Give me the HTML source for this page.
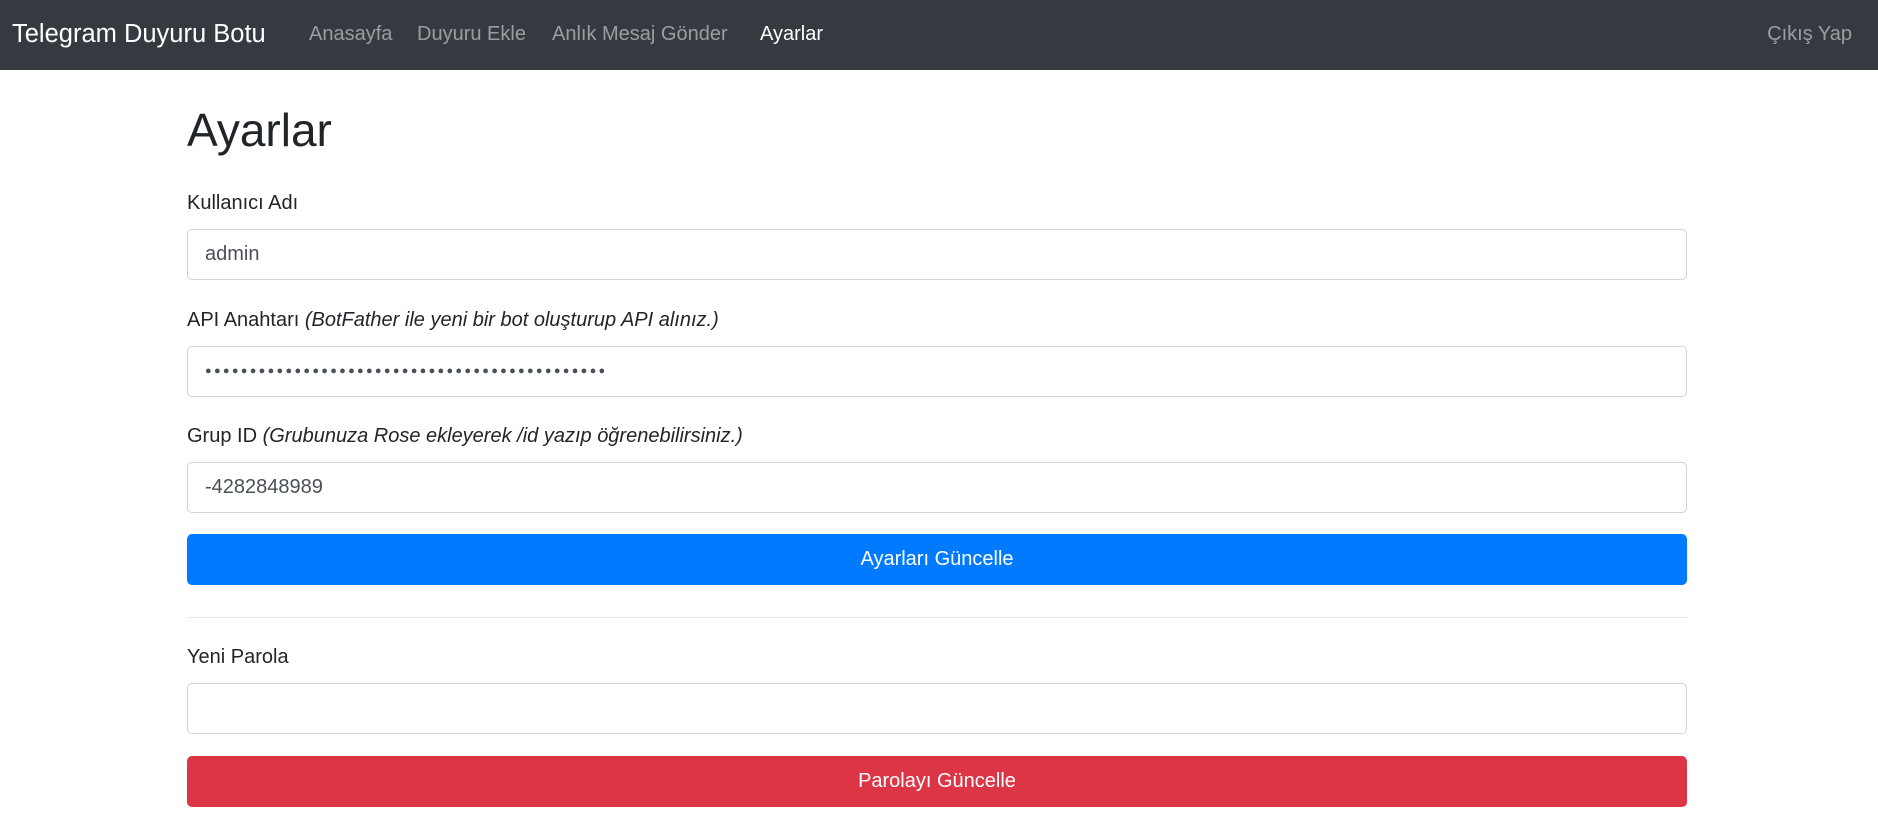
<!DOCTYPE html>
<html><head><meta charset="utf-8"><style>
*{box-sizing:border-box;margin:0;padding:0}
body{width:1878px;height:824px;background:#fff;font-family:"Liberation Sans",sans-serif;color:#212529;position:relative;overflow:hidden}
.nav{position:absolute;left:0;top:0;width:1878px;height:70px;background:#343a40}
.nav span{position:absolute;top:0;line-height:68px;font-size:20px;color:rgba(255,255,255,.5);white-space:nowrap}
.nav .brand{font-size:25.5px;color:#fff;left:12px}
.abs{position:absolute;white-space:nowrap}
.lbl{font-size:20px;color:#212529}
.inp{position:absolute;left:187px;width:1500px;height:51px;border:1px solid #ced4da;border-radius:5px;background:#fff;font-size:20px;color:#495057;padding-left:17px;line-height:49px}
.btn{position:absolute;left:187px;width:1500px;height:51px;border-radius:5px;color:#fff;font-size:20px;text-align:center;line-height:51px}
</style></head><body>
<div class="nav">
<span class="brand">Telegram Duyuru Botu</span>
<span style="left:309px">Anasayfa</span>
<span style="left:417px">Duyuru Ekle</span>
<span style="left:552px">Anlık Mesaj Gönder</span>
<span style="left:760px;color:#fff">Ayarlar</span>
<span style="right:26px">Çıkış Yap</span>
</div>
<div class="abs" style="left:187px;top:102px;font-size:46px;line-height:56px;font-weight:normal;color:#212529">Ayarlar</div>
<div class="abs lbl" style="left:187px;top:192px">Kullanıcı Adı</div>
<div class="inp" style="top:229px">admin</div>
<div class="abs lbl" style="left:187px;top:309px">API Anahtarı <i>(BotFather ile yeni bir bot oluşturup API alınız.)</i></div>
<div class="inp" style="top:346px;font-size:11px;letter-spacing:2.3px;color:#495057">●●●●●●●●●●●●●●●●●●●●●●●●●●●●●●●●●●●●●●●●●●●●●</div>
<div class="abs lbl" style="left:187px;top:425px">Grup ID <i>(Grubunuza Rose ekleyerek /id yazıp öğrenebilirsiniz.)</i></div>
<div class="inp" style="top:462px">-4282848989</div>
<div class="btn" style="top:534px;background:#007bff">Ayarları Güncelle</div>
<div class="abs" style="left:187px;top:617px;width:1500px;height:1px;background:#e5e5e5"></div>
<div class="abs lbl" style="left:187px;top:646px">Yeni Parola</div>
<div class="inp" style="top:683px"></div>
<div class="btn" style="top:756px;background:#dc3545">Parolayı Güncelle</div>
</body></html>
